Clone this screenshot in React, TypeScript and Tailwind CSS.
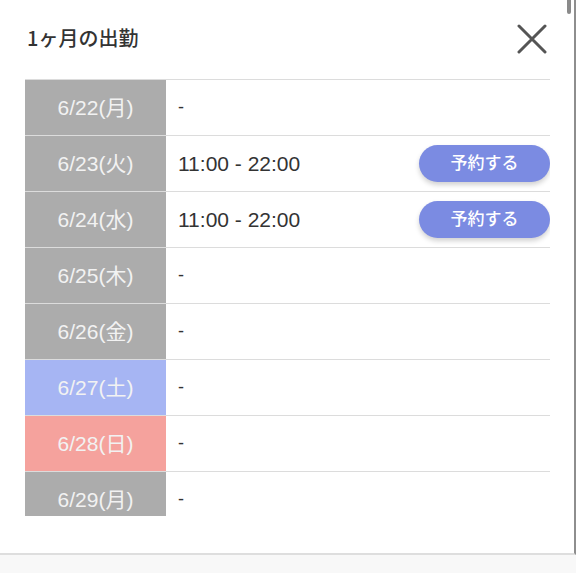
import React from 'react'

type Day = { label: string; tone: 'gray' | 'blue' | 'red'; time?: string }

const days: Day[] = [
  { label: '6/22(月)', tone: 'gray' },
  { label: '6/23(火)', tone: 'gray', time: '11:00 - 22:00' },
  { label: '6/24(水)', tone: 'gray', time: '11:00 - 22:00' },
  { label: '6/25(木)', tone: 'gray' },
  { label: '6/26(金)', tone: 'gray' },
  { label: '6/27(土)', tone: 'blue' },
  { label: '6/28(日)', tone: 'red' },
  { label: '6/29(月)', tone: 'gray' },
]

const toneClass = {
  gray: 'bg-[#acacac]',
  blue: 'bg-[#a6b5f3]',
  red: 'bg-[#f5a29d]',
}

const font = { fontFamily: '"Liberation Sans", "Noto Sans CJK JP", sans-serif' }

function Row({ day }: { day: Day }) {
  return (
    <div className="flex h-[56px] shrink-0 border-t border-[#dcdcdc]">
      <div
        className={`flex w-[141px] shrink-0 items-center justify-center text-[21px] text-[#f2f2f2] ${toneClass[day.tone]}`}
      >
        {day.label}
      </div>
      <div className="flex flex-1 items-center pl-[12px] text-[#333]">
        {day.time ? (
          <>
            <span className="text-[21px]">{day.time}</span>
            <button className="ml-auto h-[37px] w-[131px] rounded-full bg-[#7b8be2] text-[17px] font-medium text-white shadow-[0_3px_5px_rgba(0,0,0,0.18)]">
              予約する
            </button>
          </>
        ) : (
          <span className="text-[18px]">-</span>
        )}
      </div>
    </div>
  )
}

export default function App() {
  return (
    <div className="h-[573px] w-[576px] overflow-hidden bg-[#f8f8f8]" style={font}>
      <div className="relative flex h-[555px] flex-col border-b-2 border-r-2 border-b-[#dedede] border-r-[#8e8e8e] bg-white">
        {/* scrollbar thumb */}
        <div className="absolute right-[3px] top-0 h-[14px] w-[4px] rounded-b-full bg-[#8a8a8a]" />

        {/* Header */}
        <div className="flex h-[79px] shrink-0 items-center justify-between pl-[27px] pr-[27px]">
          <h2
            className="mt-[-4px] text-[20px] font-medium text-[#333]"
            style={{ fontFamily: '"Noto Sans CJK JP", sans-serif' }}
          >
            1ヶ月の出勤
          </h2>
          <svg width="30" height="30" viewBox="0 0 30 30" className="mt-[-2px]">
            <path d="M2 2 L28 28 M28 2 L2 28" stroke="#555" strokeWidth="3" strokeLinecap="round" />
          </svg>
        </div>

        {/* Schedule list */}
        <div className="ml-[25px] flex h-[437px] w-[525px] flex-col overflow-hidden">
          {days.map((d) => (
            <Row key={d.label} day={d} />
          ))}
        </div>
      </div>
    </div>
  )
}
